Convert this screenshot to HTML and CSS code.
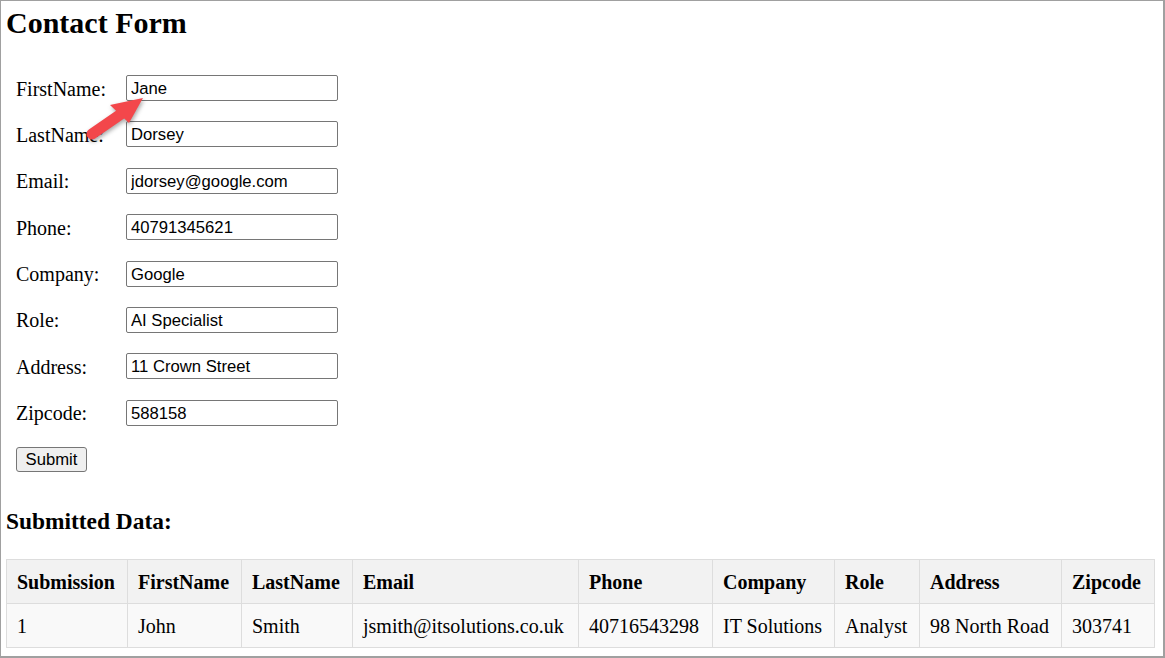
FILE: index.html
```html
<!DOCTYPE html>
<html lang="en">
<head>
    <meta charset="UTF-8">
    <meta name="viewport" content="width=device-width, initial-scale=1.0">
    <title>Contact Form</title>
    <link rel="stylesheet" href="styles.css">
</head>
<body>
    <div class="frame">
        <h1>Contact Form</h1>
        <form class="contact-form">
            <div class="field"><label for="firstName">FirstName:</label><input id="firstName" type="text" value="Jane"></div>
            <div class="field"><label for="lastName">LastName:</label><input id="lastName" type="text" value="Dorsey"></div>
            <div class="field"><label for="email">Email:</label><input id="email" type="text" value="jdorsey@google.com"></div>
            <div class="field"><label for="phone">Phone:</label><input id="phone" type="text" value="40791345621"></div>
            <div class="field"><label for="company">Company:</label><input id="company" type="text" value="Google"></div>
            <div class="field"><label for="role">Role:</label><input id="role" type="text" value="AI Specialist"></div>
            <div class="field"><label for="address">Address:</label><input id="address" type="text" value="11 Crown Street"></div>
            <div class="field"><label for="zipcode">Zipcode:</label><input id="zipcode" type="text" value="588158"></div>
            <div class="field"><button type="button" class="submit-button">Submit</button></div>
        </form>

        <h3>Submitted Data:</h3>
        <table class="data-table">
            <thead>
                <tr>
                    <th class="c-sub">Submission</th>
                    <th class="c-first">FirstName</th>
                    <th class="c-last">LastName</th>
                    <th class="c-email">Email</th>
                    <th class="c-phone">Phone</th>
                    <th class="c-company">Company</th>
                    <th class="c-role">Role</th>
                    <th class="c-address">Address</th>
                    <th class="c-zip">Zipcode</th>
                </tr>
            </thead>
            <tbody>
                <tr>
                    <td>1</td>
                    <td>John</td>
                    <td>Smith</td>
                    <td>jsmith@itsolutions.co.uk</td>
                    <td>40716543298</td>
                    <td>IT Solutions</td>
                    <td>Analyst</td>
                    <td>98 North Road</td>
                    <td>303741</td>
                </tr>
            </tbody>
        </table>

        <svg class="pointer-arrow" width="70" height="55" viewBox="80 90 70 55">
            <line x1="92" y1="134" x2="121" y2="114" stroke="#f3474b" stroke-width="11" stroke-linecap="round"/>
            <polygon points="143,98 110,105 129,123" fill="#f3474b"/>
        </svg>
    </div>
</body>
</html>
```

FILE: styles.css
```css
* {
    box-sizing: border-box;
}

body {
    margin: 0;
    font-family: 'Liberation Serif', 'Times New Roman', serif;
    font-size: 20px;
    color: #000;
    background: #fff;
}

.frame {
    position: relative;
    width: 1165px;
    height: 658px;
    border-top: 1px solid #a0a0a0;
    border-left: 1px solid #a0a0a0;
    border-right: 2px solid #a0a0a0;
    border-bottom: 2px solid #a0a0a0;
    padding: 0 0 0 5px;
    overflow: hidden;
}

h1 {
    font-size: 30px;
    line-height: 34px;
    font-weight: bold;
    margin: 5px 0 0;
}

.contact-form {
    display: flex;
    flex-direction: column;
    gap: 20.4px;
    padding: 35px 0 0 10px;
}

.field {
    display: flex;
    align-items: center;
    height: 26px;
}

.field label {
    width: 110px;
    line-height: 23px;
    padding-top: 2px;
}

.field input {
    width: 212px;
    height: 26px;
    padding: 2px 4px 0;
    border: 1px solid #767676;
    border-radius: 2px;
    font-family: 'Liberation Sans', Arial, sans-serif;
    font-size: 16.67px;
    color: #000;
    background: #fff;
}

.submit-button {
    width: 71px;
    height: 25px;
    padding: 2px 0 0;
    border: 1px solid #767676;
    border-radius: 3px;
    background: #efefef;
    font-family: 'Liberation Sans', Arial, sans-serif;
    font-size: 16.67px;
    color: #000;
}

h3 {
    font-size: 23.4px;
    line-height: 27px;
    font-weight: bold;
    margin: 36px 0 23.4px;
}

.data-table {
    border-collapse: collapse;
    table-layout: fixed;
    width: 1148px;
}

.data-table th,
.data-table td {
    border: 1px solid #ddd;
    padding: 11px 10px 9px;
    line-height: 23px;
    text-align: left;
    white-space: nowrap;
}

.data-table th {
    background: #f2f2f2;
    font-weight: bold;
}

.data-table td {
    background: #f9f9f9;
}

.c-sub { width: 121px; }
.c-first { width: 114px; }
.c-last { width: 111px; }
.c-email { width: 226px; }
.c-phone { width: 134px; }
.c-company { width: 122px; }
.c-role { width: 85px; }
.c-address { width: 142px; }
.c-zip { width: 93px; }

.pointer-arrow {
    position: absolute;
    left: 79px;
    top: 89px;
    filter: drop-shadow(1px 2px 2px rgba(0, 0, 0, 0.35));
}
```
